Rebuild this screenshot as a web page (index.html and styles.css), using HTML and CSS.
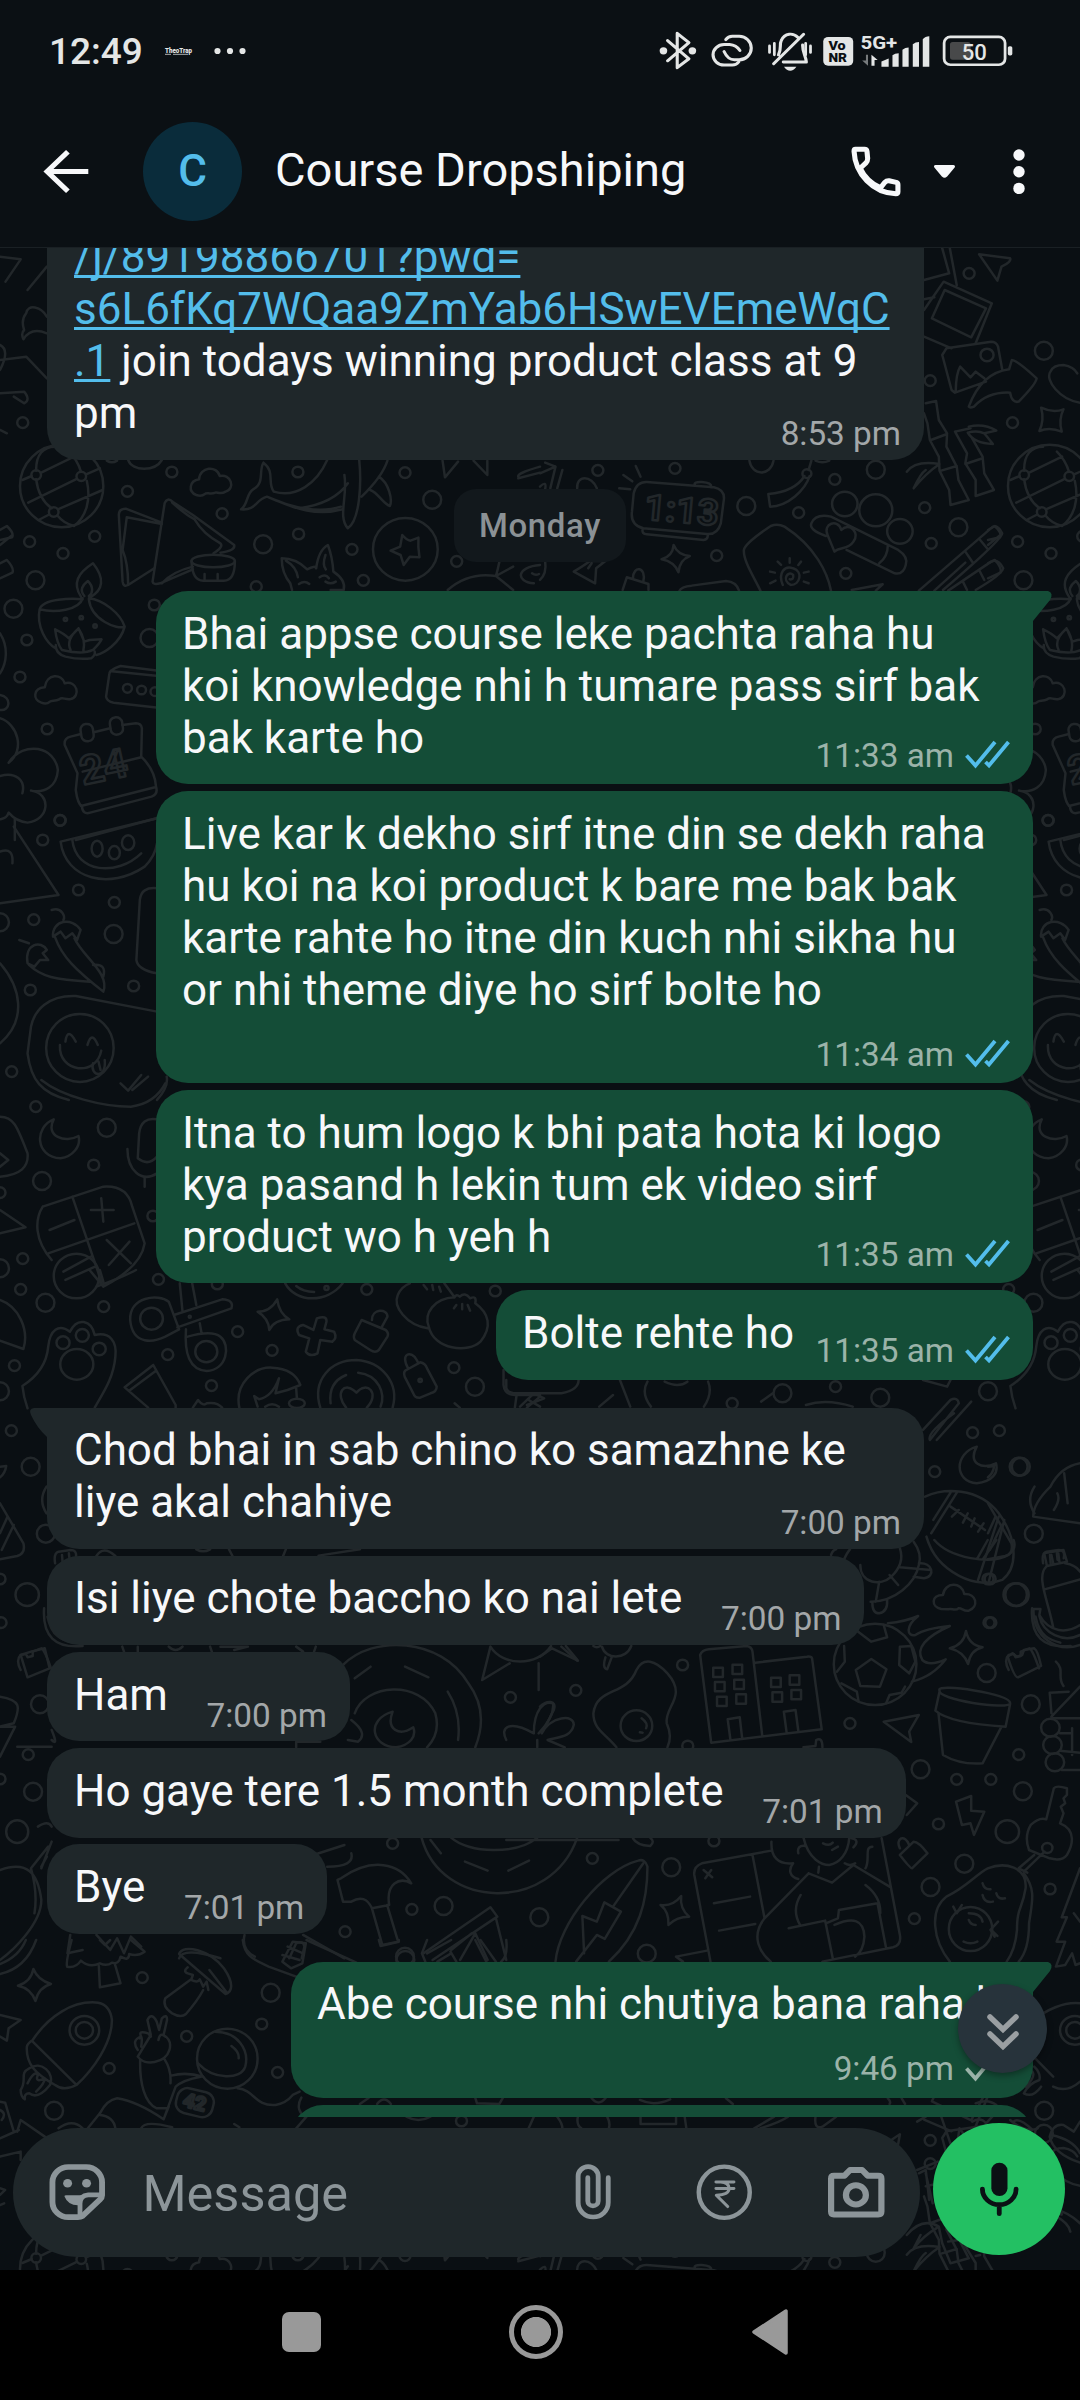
FILE: index.html
```html
<!DOCTYPE html>
<html lang="en">
<head>
<meta charset="utf-8">
<title>Course Dropshiping</title>
<link rel="stylesheet" href="styles.css">
</head>
<body>
<div class="screen">

<svg class="wallpaper" viewBox="0 0 1080 2270" width="1080" height="2270" aria-hidden="true">
  <defs>
  <g id="top">
    <g class="q" transform="translate(0 440) scale(.3444 .3333)">
      <ellipse cx="179" cy="138" rx="121" ry="124"/>
      <path d="M105 92C104 45 125 20 160 20M105 118C110 160 130 190 150 205M121 97L215 50M235 95Q225 60 200 35M65 120L92 108M82 188L220 118M250 103L290 85M168 208L298 150M140 225L112 240M252 122C265 180 250 230 215 258M168 228Q185 250 215 258"/>
      <circle cx="105" cy="105" r="14"/><circle cx="236" cy="109" r="14"/><circle cx="156" cy="216" r="14"/>
      <path d="M470 248L365 206Q345 206 345 225L356 425Q358 442 372 435L448 385M470 252L368 232L356 330Q372 370 372 432"/>
      <path d="M478 190Q486 170 502 186L560 225L680 315Q684 332 640 338M478 190L443 425Q445 436 465 430L560 388M500 188Q540 225 565 238Q590 282 640 310Q650 320 620 340M470 430Q500 395 560 380"/>
      <ellipse cx="619" cy="363" rx="63" ry="19"/><path d="M556 363Q558 422 590 422H650Q682 422 682 363M594 402V418M632 402V418"/>
      <path d="M570 165C545 155 550 122 578 118C580 80 630 75 638 108C670 100 685 145 655 155C640 165 630 155 625 158C610 165 600 155 595 162Q585 170 570 165Z"/>
      <path d="M372 60C385 95 450 95 470 60M310 62Q325 72 340 62"/>
      <path d="M765 68C800 95 775 130 795 155C860 175 920 130 950 60M765 68C750 90 770 130 735 148C715 160 720 195 700 208C745 212 740 180 775 170C830 190 900 235 995 208M780 172C850 205 930 220 990 200M1000 105C1010 170 980 230 1010 265C1045 240 1050 130 1043 60M1010 130Q970 190 870 205M1050 170Q1110 110 1125 62M1100 110C1130 130 1140 180 1132 198C1110 190 1100 160 1075 150"/>
      <path d="M1285 62L1292 112L1330 65M1375 62L1415 105V62M1505 110Q1500 100 1568 80M1505 115L1568 98"/>
      <circle cx="1177" cy="328" r="94"/>
      <path d="M1168 285Q1180 300 1192 302L1215 293Q1213 320 1218 352L1190 350L1172 375L1163 345L1134 332L1162 320Z"/>
      <path d="M848 450L843 430Q818 400 818 355Q860 355 892 388Q915 375 918 385Q925 330 952 315Q965 350 968 395Q1005 420 998 450H960M830 362Q860 380 865 412M945 345Q935 375 946 388M868 432Q885 420 898 432M928 412Q945 400 955 415M945 425Q960 435 975 425"/>
      <path d="M1300 450Q1360 395 1440 408M1440 408L1490 380M1450 365Q1445 390 1440 408L1490 450M1568 375C1500 380 1495 425 1550 430M1545 400Q1555 408 1565 402"/>
      <path d="M235 470C210 430 225 400 270 370C305 415 300 450 262 472M245 468C230 450 240 435 255 423C272 440 270 460 258 468M240 475C230 510 160 520 115 508C125 475 210 475 240 478M258 475C300 480 350 520 362 560C340 570 265 540 258 478M115 508C105 560 135 610 162 625M362 560C350 610 300 640 280 645M162 615Q160 640 190 650Q230 660 265 655Q278 645 275 635M160 568Q165 610 180 630Q240 645 270 630Q290 610 295 598L260 600L245 605L228 565L200 595Q185 580 160 568M228 565Q190 600 205 630M228 565Q250 600 242 632"/>
      <circle cx="190" cy="538" r="5"/><circle cx="236" cy="533" r="5"/><circle cx="276" cy="558" r="5"/>
      <path d="M460 692L350 678Q315 690 317 705L308 770Q310 785 330 788L460 803M325 694L460 708"/>
      <circle cx="370" cy="745" r="13"/><circle cx="411" cy="750" r="13"/><circle cx="450" cy="755" r="13"/>
      <path d="M120 788C95 780 95 745 130 742C135 700 180 700 188 730C225 720 235 770 205 777C190 780 180 770 172 778C160 785 150 780 145 785Q135 795 120 788Z"/>
      <path d="M0 300L35 292Q42 280 20 258L0 270M0 315L36 285M0 415L36 398Q42 385 20 360L0 370M0 580C25 620 20 670 0 700M0 765C35 770 30 815 0 810"/>
      <path d="M235 882L205 890Q185 895 188 915L225 1000L220 1050Q225 1090 238 1100Q240 1125 262 1118L440 1070Q460 1062 453 1040Q450 990 410 950L412 865Q410 850 395 850L355 855M272 877L320 865M240 995L410 952M235 1098L450 1042"/>
      <rect x="235" y="852" width="36" height="52" rx="17" transform="rotate(-8 252 878)"/><rect x="320" y="832" width="36" height="52" rx="17" transform="rotate(-8 338 858)"/>
      <text x="242" y="1035" font-size="120" transform="rotate(-12 242 1035)">24</text>
      <path d="M0 835C50 850 75 930 25 968C70 900 160 920 168 990C165 1040 130 1060 90 1052C150 1060 145 1140 80 1148C50 1145 35 1130 25 1118C20 1135 10 1135 0 1138M0 1008C45 995 75 1020 65 1060M43 1135V1200M220 1200L455 1135"/>
      <ellipse class="s" cx="499" cy="96"/><ellipse class="s" cx="370" cy="154"/><ellipse class="s" cx="645" cy="221"/><ellipse class="s" cx="865" cy="96"/><ellipse class="s" cx="1176" cy="98"/><ellipse class="s" cx="86" cy="305"/><ellipse class="s" cx="275" cy="289"/><ellipse class="s" cx="183" cy="340"/><ellipse class="s" cx="867" cy="282"/><ellipse class="s" cx="1022" cy="328"/><ellipse class="s" cx="1055" cy="421"/><ellipse class="s" cx="1326" cy="364"/><ellipse class="s" cx="744" cy="440"/><ellipse class="s" cx="448" cy="495"/><ellipse class="s" cx="78" cy="600"/><ellipse class="s" cx="58" cy="711"/><ellipse class="s" cx="137" cy="867"/><ellipse class="s" cx="175" cy="1141"/>
      <ellipse class="b" cx="1255" cy="179"/><ellipse class="b" cx="764" cy="313"/><ellipse class="b" cx="103" cy="421"/><ellipse class="b" cx="39" cy="506"/><ellipse class="b" cx="434" cy="594"/>
    </g>
    <g class="q" transform="translate(540 240) scale(.3444 .3333)">
      <path d="M230 745L262 748M242 705L268 724M278 678L292 710M15 668L45 680M0 700L45 680L30 745M65 690L50 745M0 740Q20 720 15 748M108 745C105 705 150 705 165 745"/>
      <path d="M310 726L505 742Q540 750 533 785L525 850Q515 885 485 882L300 865Q262 855 267 815L272 760Q280 725 310 726ZM450 735Q445 725 470 726Q500 728 497 742M298 868Q295 882 310 883L475 900Q488 898 487 885"/>
      <text x="300" y="838" font-size="108" transform="rotate(5 300 838)">1:13</text>
      <path d="M608 662C615 708 670 710 678 662M788 662L780 690M768 708Q740 755 663 762L668 800C720 800 770 750 783 708"/>
      <circle cx="775" cy="701" r="13"/><path d="M800 662Q820 672 840 662"/>
      <path d="M388 915Q400 945 435 948Q405 960 402 997Q390 965 353 958Q385 950 388 915Z"/>
      <path d="M98 995Q130 975 145 963H190L163 985L160 1030ZM140 985L150 970M0 1020Q20 1000 15 965M240 1050L252 1012L315 1032V1050M270 1015C270 975 310 980 300 1025M405 1052Q410 1040 440 1037L540 1023Q570 1025 578 1052"/>
      <path d="M640 1052C615 1000 590 960 592 930Q595 910 670 858Q690 850 710 860C800 920 835 1000 845 1052M640 1052"/>
      <path d="M705 1035C690 1000 710 975 735 985C765 995 755 1035 728 1035C700 1020 720 990 735 1005Q738 1020 725 1018M725 955V968M758 965L750 975M780 995L766 998M780 1030L766 1025M668 995L682 998M668 1030L684 1022M690 965L700 975"/>
      <circle cx="885" cy="792" r="37"/><circle cx="975" cy="811" r="48"/><circle cx="1045" cy="874" r="37"/>
      <path d="M830 888Q780 870 788 850Q800 820 845 830L1040 930Q1070 950 1062 975Q1055 1005 1030 1000L890 930M835 885C820 850 865 835 875 870C900 845 930 880 910 905C895 930 870 920 855 935ZM1010 915Q1010 950 985 970"/>
      <path d="M905 1050L995 1033L975 1052M1100 1052L1315 860Q1330 855 1342 880Q1340 900 1170 1050M1145 1052L1235 968M1235 935L1258 970M1278 900L1298 925M1185 1052L1310 965Q1330 955 1345 985Q1340 1005 1265 1050M1228 1025L1240 1050M1275 990L1290 1020"/>
      <path d="M1065 695Q1090 660 1160 672Q1120 700 1085 745Q1105 700 1120 690M1120 490L1150 483L1158 540L1182 580L1180 620L1210 680L1215 720L1245 780L1192 795L1188 750L1160 692L1158 650L1132 600L1125 550L1115 520M1135 600L1182 582M1165 692L1210 678M1205 575L1250 565M1205 575L1240 640L1235 670L1265 720V768L1318 750L1290 700L1285 650L1252 590M1235 672L1285 655M1245 560Q1290 550 1325 572L1290 580L1315 612Q1260 610 1242 578Q1270 570 1290 580"/>
      <path d="M1275 43L1365 55Q1370 65 1340 80L1328 122ZM1168 25L1188 100L1115 120M1190 25L1210 135M1115 210L1172 125L1312 190L1265 310M1175 150L1138 235L1252 292L1295 205ZM1115 178L1145 172M1115 290L1195 325"/>
      <path d="M1295 425L1205 458L1195 450L1168 345L1180 325L1310 305Q1325 305 1330 320L1342 388M1207 455Q1208 400 1220 380L1250 412L1265 395L1290 415M1245 500C1270 430 1310 395 1362 388L1370 360Q1385 360 1442 415Q1442 430 1390 485Q1370 490 1365 458Q1300 455 1260 500Q1248 505 1245 500Z"/><circle cx="1298" cy="345" r="19"/>
      <path d="M1455 503Q1490 520 1520 508Q1505 540 1515 575Q1480 560 1450 573Q1465 540 1455 503Z"/>
      <path d="M1568 488C1510 480 1465 420 1482 395Q1490 375 1520 375Q1550 380 1560 400"/>
      <ellipse class="s" cx="168" cy="691"/><ellipse class="s" cx="392" cy="685"/><ellipse class="s" cx="856" cy="718"/><ellipse class="s" cx="751" cy="818"/><ellipse class="s" cx="513" cy="947"/><ellipse class="s" cx="888" cy="1000"/><ellipse class="s" cx="1117" cy="803"/><ellipse class="s" cx="1136" cy="910"/><ellipse class="s" cx="1372" cy="548"/><ellipse class="s" cx="1133" cy="422"/><ellipse class="s" cx="1246" cy="100"/>
      <ellipse class="b" cx="599" cy="798"/><ellipse class="b" cx="975" cy="689"/><ellipse class="b" cx="1215" cy="862"/><ellipse class="b" cx="1463" cy="332"/>
    </g>
  </g>

  <g id="left">
    <g class="n" transform="translate(0 580) scale(.6888 .3333)">
      <path d="M88 785L228 715M88 785C95 900 160 930 210 860Q225 830 228 790M105 780C110 880 170 890 205 820M20 740L85 945L0 970M0 815Q20 800 18 850"/>
      <ellipse cx="141" cy="806" rx="8" ry="24"/><ellipse cx="166" cy="818" rx="8" ry="20"/><ellipse cx="186" cy="788" rx="9" ry="22"/>
      <path d="M75 990C90 980 95 1010 92 1020M77 1070C75 1020 105 1010 117 1050L112 1080L105 1060L95 1075L88 1055ZM80 1072C90 1130 110 1170 150 1235C160 1180 120 1130 108 1075M28 1080L42 1090M40 1150C35 1090 60 1080 68 1110L62 1120L70 1140L58 1140L50 1160ZM42 1155C60 1190 80 1200 130 1205M135 1155Q155 1150 150 1190M228 925Q205 920 203 960L198 1140Q200 1170 228 1180"/>
      <path d="M228 1295L110 1248C70 1245 50 1290 45 1340L40 1420C45 1500 60 1540 100 1560M228 1560Q245 1520 242 1490M0 1150C30 1220 40 1320 0 1390"/>
      <ellipse cx="116" cy="1404" rx="49" ry="102"/><path d="M95 1385Q98 1340 110 1385M127 1395Q133 1350 142 1395M87 1395C85 1480 140 1490 147 1412M135 1450C130 1490 155 1500 152 1440M143 1445L146 1470M175 1510L186 1532L205 1485M192 1530L215 1490"/>
      <ellipse class="s" cx="87" cy="721"/><ellipse class="s" cx="62" cy="780"/><ellipse class="s" cx="114" cy="930"/><ellipse class="s" cx="166" cy="967"/><ellipse class="s" cx="49" cy="1019"/><ellipse class="b" cx="165" cy="1062"/><ellipse class="s" cx="194" cy="1218"/><ellipse class="s" cx="44" cy="1230"/><ellipse class="s" cx="17" cy="1475"/><ellipse class="b" cx="0" cy="1027"/>
    </g>
    <g class="n" transform="translate(0 1080) scale(.6888 .3333)">
      <path d="M60 0C90 50 150 80 190 80Q225 70 240 10M0 110C20 110 25 140 40 220C42 260 30 285 0 290M0 220L12 240L0 260M78 118C50 140 50 230 88 235C105 230 118 200 114 168C95 190 65 170 78 118ZM228 118Q205 110 202 160L200 235Q215 260 228 230M185 207C185 270 205 310 228 280M210 290V320M0 390L37 442L0 460"/>
      <path d="M62 380L150 320Q185 315 192 380L210 490Q205 560 150 620L130 570M62 380C50 420 50 480 75 540M105 350L148 610M70 520L195 430M72 450L108 420M132 390L165 390M147 355L150 425M155 480L190 550M188 485L158 555M92 575L132 530M95 600L138 560"/>
      <ellipse cx="111" cy="588" rx="33" ry="67"/>
      <ellipse class="s" cx="52" cy="80"/><ellipse class="b" cx="155" cy="143"/><ellipse class="s" cx="136" cy="255"/><ellipse class="b" cx="61" cy="303"/><ellipse class="s" cx="0" cy="338"/><ellipse class="s" cx="33" cy="536"/><ellipse class="b" cx="0" cy="565"/><ellipse class="s" cx="222" cy="408"/>
    </g>
    <g class="q" transform="translate(0 1270) scale(.3444 .3333)">
      <path d="M65 348C100 325 135 290 140 230C145 180 170 160 203 185C225 140 265 150 275 195C320 185 340 215 335 260C330 320 305 360 275 413M65 348Q68 380 80 415"/>
      <circle cx="183" cy="218" r="19"/><circle cx="239" cy="196" r="19"/><circle cx="288" cy="237" r="19"/><ellipse cx="223" cy="283" rx="48" ry="46"/>
      <path d="M0 90C55 110 85 180 68 237L0 212M0 590L18 588Q15 610 0 622M0 700L68 820Q75 850 50 858L0 868M0 790L22 740M5 840L40 765M160 880Q155 850 170 845L205 840Q225 840 220 865M180 855L182 880M200 850L202 870M128 1015Q120 1140 240 1128M138 1040C150 1100 180 1110 210 1118M60 1200Q45 1170 60 1155L75 1152L80 1162L95 1158V1145L120 1135Q130 1140 148 1195M135 650Q110 690 135 730"/>
      <ellipse class="s" cx="60" cy="58"/><ellipse class="s" cx="301" cy="110"/><ellipse class="s" cx="42" cy="287"/><ellipse class="s" cx="33" cy="482"/><ellipse class="s" cx="0" cy="927"/><ellipse class="s" cx="3" cy="1058"/><ellipse class="b" cx="132" cy="98"/><ellipse class="b" cx="0" cy="364"/><ellipse class="b" cx="89" cy="590"/><ellipse class="b" cx="133" cy="791"/><ellipse cx="79" cy="974" rx="34" ry="34"/>
    </g>
  </g>
  </defs>

  <g class="lines">
    <use href="#top"/>
    <use href="#top" x="988"/>
    <use href="#top" y="1783"/>
    <use href="#left"/>
    <use href="#left" x="988"/>
    <g class="n" transform="translate(0 240) scale(.6888 .3333)">
      <path d="M0 50L30 58L8 125M68 230C60 200 40 190 38 220Q30 240 35 270Q30 280 34 298Q45 260 68 280M0 360L38 350L68 415M0 460L35 455Q45 480 35 490L20 470M0 570L10 580M40 150L68 80M0 315Q15 330 0 390"/>
      <ellipse class="s" cx="33" cy="548"/>
    </g>

    <g class="q" transform="translate(0 1270) scale(.3444 .3333)">
      <path d="M280 50Q360 20 395 0M290 0L300 35"/>
      <path d="M490 95C460 70 375 80 378 150C385 230 450 215 480 200L520 178ZM505 135L645 88Q680 90 672 115L515 172M522 40L530 125M558 40L570 105M540 178C535 250 550 300 600 303C660 300 670 225 640 200Q615 180 545 200M580 160L585 188"/>
      <circle cx="440" cy="146" r="33"/><circle cx="599" cy="245" r="32"/><circle cx="551" cy="140" r="3"/>
      <path d="M805 88Q810 130 840 148Q795 150 782 180Q780 145 748 125Q785 125 805 88ZM920 145Q950 135 948 155L942 178L970 185Q980 205 965 215L930 210L922 250Q900 262 888 245L898 205L868 195Q855 170 880 165L910 180Z"/>
      <path d="M1050 150L1120 180Q1130 190 1125 200L1100 240Q1090 250 1075 240L1030 210Q1025 200 1030 190ZM1080 150C1080 115 1125 115 1125 140L1108 172M1180 300L1220 277Q1235 280 1240 295L1268 350Q1268 365 1250 370L1220 383Q1205 385 1200 370L1175 320Q1170 305 1180 300ZM1185 295C1160 250 1195 240 1210 270L1215 280"/><circle cx="1220" cy="331" r="5"/>
      <path d="M1242 175C1180 165 1140 110 1155 75Q1165 50 1190 40M1320 82C1260 85 1230 130 1245 170C1260 240 1360 250 1395 215C1430 170 1420 130 1380 100Q1385 75 1365 85Q1350 65 1335 80Q1325 70 1320 82L1290 40M1325 105L1318 115M1342 102V118M1358 105L1365 122M1230 45L1240 58M1255 45L1258 60M1275 50L1280 65"/>
      <path d="M828 40C860 100 950 100 995 40M860 48Q880 65 912 66"/><circle cx="948" cy="54" r="6"/>
      <path d="M445 285L362 352L430 413M445 285L510 405V413M375 362L452 303M560 413L575 390Q590 410 600 400Q630 395 645 413M695 413C680 340 740 290 790 293C830 295 860 310 872 345L835 360L800 370L810 325Q790 380 752 388L738 378L748 410M770 410Q790 395 810 410M860 355L862 385"/>
      <ellipse cx="862" cy="400" rx="23" ry="14"/>
      <path d="M930 413C905 330 960 270 1035 270C1110 275 1160 340 1140 413M960 400C955 360 970 330 1005 315M1040 308C1100 315 1120 370 1105 410M1005 413C970 370 1000 330 1035 368C1065 330 1105 370 1065 413"/>
      <path d="M1462 300V345Q1465 375 1495 375H1568M1500 375L1495 413M1530 413L1568 380M1535 390L1568 410M1320 400L1335 413"/>
      <path d="M280 858Q300 825 335 858M570 838Q590 850 610 838M665 838L675 858M830 838L822 858M925 857L1045 838M355 1130L360 1145M400 1130V1145M490 1130Q510 1150 530 1130M610 1130L615 1145M640 1130L720 1130L680 1140M860 1130L880 1145M917 1130L912 1145"/>
      <ellipse class="s" cx="460" cy="28"/><ellipse class="s" cx="631" cy="42"/><ellipse class="s" cx="690" cy="185"/><ellipse class="s" cx="487" cy="254"/><ellipse class="s" cx="614" cy="347"/><ellipse class="s" cx="790" cy="241"/><ellipse class="s" cx="1065" cy="58"/><ellipse class="s" cx="1318" cy="293"/><ellipse class="s" cx="1438" cy="63"/><ellipse class="b" cx="1379" cy="350"/>
    </g>
    <g class="n" transform="translate(0 1080) scale(.6888 .3333)">
      <path d="M735 900V925Q738 940 750 940H815Q840 930 840 900M755 980L775 940L790 955L765 975M870 980L890 945M900 900L915 980M940 905Q930 940 945 980M1028 905Q1035 940 1022 980M965 905Q985 925 998 905M1340 900L1375 920L1380 900M1340 1050L1380 960Q1390 950 1392 970L1350 1080Q1345 1060 1385 1000M1360 1080L1410 965M1105 965L1122 940M1170 975Q1200 955 1238 980"/>
      <path d="M1418 1100C1385 1120 1385 1205 1418 1210C1440 1205 1450 1180 1446 1150C1425 1170 1405 1150 1418 1100ZM1343 1250C1370 1225 1420 1220 1450 1300C1475 1370 1480 1460 1455 1500C1420 1530 1360 1480 1345 1370M1380 1238L1355 1320M1390 1235L1352 1360M1450 1310L1420 1500M1458 1320L1435 1510M1380 1280L1430 1350M1382 1310L1392 1290M1398 1328L1405 1300M1410 1340L1415 1315M1420 1355L1428 1330"/>
      <ellipse class="b" cx="1136" cy="940"/><ellipse class="s" cx="1213" cy="920"/><ellipse class="b" cx="1278" cy="953"/><ellipse class="s" cx="1412" cy="1058"/><ellipse class="s" cx="1357" cy="1175"/><ellipse class="b" cx="1482" cy="1160"/><ellipse class="s" cx="1063" cy="970"/>
      <path d="M1568 1150Q1540 1160 1525 1220Q1500 1270 1500 1310L1568 1330M1545 1180L1550 1270M1535 1240Q1540 1260 1530 1290"/>
    </g>
    <g class="q" transform="translate(540 1540) scale(.3444 .3333)">
      <path d="M845 45Q850 30 860 28M880 65Q890 40 900 28M930 75C930 130 990 140 1020 110Q1060 70 1045 25M1085 5Q1110 40 1100 75C1090 130 1030 185 960 185M1045 82L1135 90M1100 70C1140 65 1150 110 1115 115L1085 110M1015 105L1040 135M985 125L975 185M965 188Q965 220 985 220Q1010 215 1008 180"/>
      <path d="M1145 0C1190 55 1310 75 1360 45Q1385 25 1375 0M1270 55L1300 0M1288 55L1325 0"/>
      <path d="M1165 207C1135 200 1135 165 1170 165C1175 125 1225 125 1232 162C1268 160 1275 200 1245 212C1230 215 1225 203 1215 205C1205 215 1195 203 1185 208Z"/>
      <ellipse cx="973" cy="373" rx="120" ry="122"/><path d="M962 357L1006 388L987 440L930 438L917 390ZM920 272L962 305L1008 292L998 255M1045 320L1078 318L1090 365L1072 400L1043 375ZM883 318L885 365L862 395M875 430L920 455L925 485M1060 440L1050 458L1015 465L1005 490M1010 250Q1060 245 1098 228C1060 260 1065 290 1090 285Q1120 265 1190 258C1120 290 1090 325 1110 360Q1130 380 1178 358Q1140 410 1080 425"/>
      <path d="M1237 273Q1245 315 1285 322Q1250 330 1243 372Q1230 335 1190 325Q1230 315 1237 273ZM1358 350L1372 340L1385 350L1400 345L1405 330L1435 325Q1445 330 1455 378L1388 412Q1378 415 1358 350ZM1498 365C1525 390 1500 410 1520 438"/>
      <path d="M1465 45Q1460 40 1470 38L1520 30L1530 65L1472 78ZM1485 45L1490 70M1505 40L1508 65M1470 80C1440 110 1475 180 1490 262M1525 70Q1555 75 1568 95M1465 148L1568 118M1433 207H1453L1450 225C1480 280 1530 280 1568 255M1433 207C1430 290 1500 340 1568 315M1450 228C1460 280 1520 310 1568 285"/>
      <path d="M465 345Q470 330 490 328L600 318Q615 320 617 335L645 585M465 345L497 608L818 568L790 355Q788 348 775 350L625 368M545 538L580 532L587 595M545 538L553 600M708 515L742 510L750 573M708 515L716 577"/>
      <rect x="503" y="383" width="28" height="28"/><rect x="559" y="374" width="28" height="28"/><rect x="508" y="426" width="28" height="28"/><rect x="564" y="419" width="28" height="28"/><rect x="514" y="470" width="28" height="28"/><rect x="570" y="463" width="28" height="28"/><rect x="671" y="413" width="28" height="28"/><rect x="725" y="406" width="28" height="28"/><rect x="675" y="457" width="28" height="28"/><rect x="730" y="450" width="28" height="28"/>
      <path d="M222 622C190 580 155 570 155 520C165 440 250 470 280 390C300 350 335 360 370 400C430 470 360 500 368 550Q385 590 370 622"/><circle cx="280" cy="557" r="46"/><path d="M295 535Q315 550 308 565M290 577L298 578"/>
      <path d="M0 350L35 325L110 362L75 318M180 320C190 360 250 360 265 318M208 352L195 388Q180 385 190 352M0 500C20 480 50 480 40 510L5 580C30 530 100 520 98 555C90 590 60 590 22 600L72 622M155 318Q165 325 175 318M765 622L800 618L802 600Q820 590 820 622"/>
      <path d="M998 545L1100 525L1072 575L1078 606ZM1160 450C1150 430 1370 460 1365 490C1360 510 1150 480 1160 450ZM1160 455L1148 512Q1190 550 1352 560L1365 492M1157 520L1170 645Q1220 675 1285 670L1340 560M1485 520L1480 458L1535 455M1485 530L1568 440M1485 535H1568M1510 580H1540M1510 632L1568 638M1515 690H1568M1545 565V645"/>
      <circle cx="1482" cy="563" r="27"/><circle cx="1488" cy="615" r="27"/><circle cx="1495" cy="667" r="27"/>
      <path d="M1208 785L1252 768V812L1290 815L1260 885L1250 850L1225 855ZM1062 765L1095 790L1065 825M1492 745Q1500 735 1530 745V765L1520 775L1525 790L1512 800L1520 820L1510 850C1560 870 1545 920 1530 945Q1515 965 1480 955L1420 930Q1405 890 1425 855Q1450 830 1470 838ZM1465 935L1405 995M1435 945L1390 985L1415 998"/><circle cx="1473" cy="924" r="15"/>
      <path d="M1045 945L1085 905Q1100 905 1125 940L1080 985Q1075 985 1045 945ZM1045 925C1030 895 1060 880 1072 915M1190 1265C1140 1200 1130 1110 1180 1070C1240 1040 1270 1000 1300 985C1350 965 1415 980 1410 1045C1400 1110 1385 1100 1385 1170Q1380 1230 1355 1265M1405 1000C1440 1050 1430 1080 1420 1150Q1420 1230 1390 1265M1285 1030Q1290 1050 1308 1048M1285 1065Q1290 1090 1315 1085M1325 1060Q1330 1080 1350 1075M1200 1100L1210 1120L1225 1095M1245 1120Q1280 1120 1285 1145M1245 1140Q1250 1155 1265 1155M1230 1205Q1250 1215 1270 1205M1330 1145L1308 1170L1320 1190M1310 1170L1328 1188"/><ellipse cx="1250" cy="1167" rx="63" ry="66"/>
      <path d="M45 1265C55 1150 180 990 285 962Q305 955 312 980C312 1080 290 1180 200 1265M300 970L212 1100M105 1265L165 1185L188 1197L235 1115L187 1087L165 1145L123 1128L128 1240M350 1095Q385 1100 410 1068Q405 1105 433 1130Q395 1130 373 1155Q375 1115 350 1095M270 895Q280 915 320 918Q335 905 320 893"/>
      <path d="M672 932L470 970Q445 980 448 1005L495 1265M617 945L652 1135M475 990L500 1012M497 990L480 1015M505 1090L610 1070M520 1172L625 1152M395 1250L485 1232M395 1250L415 1265M672 905C670 950 690 975 735 970C720 990 725 1010 750 1017M765 893C780 960 820 975 840 975C870 970 895 940 898 893M885 970Q900 980 915 970M965 920C940 920 960 960 945 985M992 895L1045 1185Q1050 1215 1025 1222L820 1265M750 940Q745 915 770 918M905 895Q930 900 910 922M822 910Q840 920 850 908M848 930L865 920M810 980L808 998M780 1000L848 1028L910 975L1015 1040M780 1000L652 1135C610 1190 640 1240 670 1265M757 1065Q730 1110 755 1155M722 1165L828 1142L850 1255M830 1150L865 1135L868 1110L980 1090L1005 1225M855 1155C910 1130 940 1140 942 1190C940 1220 930 1240 915 1250M945 1035Q990 1070 988 1120"/>
      <path d="M1568 985L1515 1132H1530L1500 1205L1525 1205L1498 1280L1525 1275L1545 1240L1555 1275L1568 1270M1550 1120L1568 1145"/>
      <ellipse class="s" cx="1307" cy="117"/><ellipse class="s" cx="1309" cy="248"/><ellipse class="s" cx="414" cy="375"/><ellipse class="s" cx="104" cy="451"/><ellipse class="s" cx="900" cy="550"/><ellipse class="s" cx="1390" cy="644"/><ellipse class="s" cx="1210" cy="718"/><ellipse class="s" cx="1309" cy="718"/><ellipse class="s" cx="1157" cy="852"/><ellipse class="s" cx="505" cy="903"/><ellipse class="s" cx="152" cy="955"/><ellipse class="s" cx="1087" cy="1136"/><ellipse class="s" cx="1481" cy="1047"/><ellipse class="s" cx="429" cy="618"/>
      <ellipse class="b" cx="1297" cy="399"/><ellipse class="b" cx="1425" cy="493"/><ellipse class="b" cx="1105" cy="688"/><ellipse class="b" cx="1402" cy="754"/><ellipse class="b" cx="1232" cy="971"/><ellipse class="b" cx="1134" cy="1041"/><ellipse class="b" cx="381" cy="982"/><ellipse class="b" cx="310" cy="1241"/><circle cx="1385" cy="164" r="34"/><circle cx="1357" cy="875" r="34"/>
    </g>
    <g class="n" transform="translate(0 1540) scale(.6888 .3333)">
      <path d="M498 375C540 285 640 290 680 430C705 500 700 570 690 622M515 415L538 380M588 380L622 412M650 455Q670 520 665 600M515 520C530 430 610 420 632 520Q640 580 620 622M570 515C530 540 540 620 575 622C595 615 605 590 600 562C580 590 560 570 570 515ZM510 540Q535 580 520 605L505 600M430 622V605H465M700 420L712 320M700 420L740 370M782 450V370M838 362L815 320M712 320C730 380 780 380 800 318M735 600C725 560 740 540 775 580C775 510 790 480 803 490Q805 530 782 580M780 600V622M0 470C30 480 30 500 20 550L0 560M0 560H22L0 650M75 570Q85 620 75 600M25 620L75 620"/>
      <path d="M612 893C640 1110 800 1120 838 893M655 893C680 940 750 945 780 893M675 965L708 992M738 992L768 962M625 900L640 940M735 900H898M495 1015C540 950 580 970 597 1030C580 1010 560 1030 565 1095L540 1105Q530 1060 510 1085L498 1085L490 1020ZM540 1105L555 1215L578 1205L562 1095M615 1240L712 1102L722 1130L628 1260M690 1180L668 1260M690 1180L708 1260M720 1135L735 1260M655 1230L685 1180M455 945L500 915M475 980Q515 980 510 940"/>
      <path d="M0 990C40 960 55 1000 60 1080C60 1150 20 1230 0 1260M60 985L75 905M45 985Q55 1060 50 1120M45 985L70 920M60 980L68 950M55 860Q70 840 75 860M102 1185L98 1240L120 1230M355 1185Q350 1230 370 1250M440 1185L500 1255M420 1255L430 1210Q440 1200 442 1220L438 1255M260 1255Q265 1220 320 1255M140 1185L160 1230L170 1195L180 1240L190 1190L205 1220M30 345L45 335M30 345L40 412L72 385L65 325L45 335"/>
      <ellipse class="b" cx="58" cy="493"/><ellipse class="s" cx="41" cy="644"/><ellipse class="b" cx="48" cy="755"/><ellipse class="s" cx="0" cy="717"/><ellipse cx="25" cy="875" rx="16" ry="34"/><ellipse class="s" cx="741" cy="472"/><ellipse class="s" cx="598" cy="1108"/><ellipse class="b" cx="644" cy="1098"/><ellipse class="s" cx="501" cy="1175"/><ellipse class="s" cx="570" cy="910"/><ellipse class="b" cx="783" cy="1132"/><ellipse class="b" cx="588" cy="1250"/>
    </g>
    <g class="q" transform="translate(0 1940) scale(.3444 .3333)">
      <path d="M97 87Q110 120 148 132Q112 142 103 183Q90 145 52 137Q90 125 97 87ZM0 225L60 240L25 265L20 302L0 290M105 0Q75 85 0 102M75 0Q55 50 0 72"/>
      <path d="M208 0Q190 70 195 80Q220 85 235 62Q260 85 290 70Q310 80 325 68Q345 75 350 50Q375 65 375 42Q400 50 420 35L380 0M290 0L305 15L320 0M287 78L290 142L350 130L333 70"/>
      <path d="M95 300C140 230 210 180 285 188Q320 195 325 240C325 310 270 390 222 435Q185 455 160 435C100 400 75 370 78 320Q80 310 95 300ZM95 305L222 435M145 435C160 400 120 360 85 385C55 400 80 420 60 450Q60 470 72 478Q70 460 85 460Q110 480 145 435M80 430Q100 390 110 405Q100 430 130 415Q130 430 105 455"/><circle cx="245" cy="271" r="43"/><circle cx="245" cy="271" r="25"/>
      <path d="M520 42C530 10 610 30 650 85C680 130 675 155 655 162ZM545 82Q530 95 545 100L560 105L555 120Q575 130 580 118L590 140L600 125L605 150M608 90L660 160M555 118L480 175Q470 200 500 220Q525 235 540 222Q575 180 590 150"/>
      <path d="M705 0C710 50 740 60 780 80L860 110M890 0L1035 68M850 5L820 65L845 85L878 70L888 10ZM820 45L870 60M835 20L880 40M1100 0L1105 18L1158 5V0M1240 0L1225 40L1235 65M1240 40L1310 0M1310 40L1270 65M1308 35L1325 65M1380 0L1412 65M1395 0L1440 65M1470 0Q1475 50 1455 65"/>
      <path d="M400 330Q380 300 410 290Q400 270 430 280L438 290M438 285L428 240Q440 215 455 245L462 270L470 235Q485 220 485 240L475 285Q500 300 492 330C480 370 420 380 400 350ZM405 295Q415 280 410 320M460 300Q465 275 480 290M407 358C405 430 420 490 455 505L483 505M478 358Q498 390 495 430M497 407Q540 395 590 410M583 410Q530 420 510 440L475 538Q400 485 340 475Q310 480 290 520L255 565M290 525Q330 530 335 565M475 538L490 500M690 445C740 450 740 500 800 495Q830 490 850 465L870 455M410 565Q420 540 500 562M170 565Q210 535 240 565M0 485L15 488L40 575M0 510Q20 520 5 540M50 575L60 540L130 590M0 595L55 570M680 552L695 562M0 650L60 635V660M0 745L15 750L0 765M0 795L12 790"/>
      <ellipse cx="660" cy="356" rx="88" ry="90"/><path d="M575 370C620 420 700 420 712 380C725 330 690 275 625 275M672 318Q695 335 693 355"/>
      <rect x="512" y="450" width="108" height="76" rx="30" transform="rotate(14 566 487)"/><text x="532" y="507" font-size="58" transform="rotate(14 566 487)">42</text>
      <path d="M875 473C860 500 870 520 885 530M1045 492L1070 474M1180 530Q1215 550 1250 530M1095 492Q1115 465 1135 492M1380 474L1385 490L1450 492L1460 474M890 530L860 565M1535 565L1550 530"/>
      <ellipse class="s" cx="413" cy="113"/><ellipse class="s" cx="542" cy="289"/><ellipse class="s" cx="317" cy="385"/><ellipse class="s" cx="760" cy="252"/><ellipse class="s" cx="806" cy="397"/><ellipse class="s" cx="1340" cy="543"/><ellipse class="b" cx="786" cy="158"/><ellipse class="b" cx="157" cy="512"/><ellipse class="b" cx="1177" cy="60"/>
    </g>
    <g class="q" transform="translate(540 1940) scale(.3444 .3333)">
      <path d="M1435 240C1470 210 1520 185 1568 190M1433 350L1490 410M1435 380Q1455 400 1450 420Q1420 430 1405 460Q1430 475 1455 440M1430 395Q1440 410 1410 440M1490 440Q1530 460 1568 425"/><circle cx="1553" cy="271" r="43"/><circle cx="1553" cy="271" r="25"/>
      <path d="M1265 490Q1300 475 1325 495M1255 545Q1280 530 1295 550L1340 500M1375 545Q1390 530 1430 570M1365 540Q1410 580 1445 565M1480 590Q1490 550 1520 555L1550 575L1568 545M1480 590Q1490 640 1568 668M1485 585Q1550 600 1568 640M1020 600L1045 583L1040 612M1120 530L1095 545M1165 530L1195 620M1210 620L1218 565L1232 585M1095 690L1155 665M1100 700L1120 690L1130 780M1120 700L1140 790"/>
      <path d="M1065 885Q1110 830 1158 860Q1110 890 1085 925L1105 885M1158 860L1168 910L1192 970L1245 955L1220 905M1185 905L1215 900M1265 948L1278 945M1480 800Q1540 820 1568 850M1500 830Q1535 850 1540 875"/>
      <path d="M292 530V552H395V530M290 480Q330 500 378 478M110 530Q105 555 120 565M195 530Q205 550 200 565M420 530L425 565M50 530Q65 550 65 565M622 565L680 530M640 565Q700 545 720 530M800 530Q795 570 820 560L860 530M150 475Q170 500 190 475M540 475L560 492M1010 475Q1020 485 1015 492M1050 475L1060 492"/>
      <ellipse class="s" cx="1133" cy="601"/><ellipse class="b" cx="1464" cy="512"/>
    </g>
  </g>
</svg>

<div class="status-bar">
  <span class="clock">12:49</span>
  <svg class="notif" viewBox="0 0 28 8" width="28" height="8"><text x="0" y="6.2" textLength="27" lengthAdjust="spacingAndGlyphs">TheoTrap</text><path d="M0 7.3H6M8 7.3H23"/></svg>
  <svg class="dots3" viewBox="0 0 32 8" width="32" height="8"><circle cx="3.5" cy="4" r="3.1"/><circle cx="16" cy="4" r="3.1"/><circle cx="28.500" cy="4" r="3.1"/></svg>
  <svg class="tray" viewBox="348 90 1025 130" width="353" height="43" preserveAspectRatio="none">
    <g class="st" stroke-width="9">
      <path d="M370 122L432 177L398 204V100L432 128L370 183"/>
      <path d="M539 119Q546 109 558 109H578A35 35.500 0 0 1 578 180H564Q545 180 534 155"/><path d="M577 186Q570 196 558 196H534A32 31 0 0 1 534 134H550Q570 136 580 152"/>
      <path d="M692 165C702 145 694 135 700 122C710 98 735 98 748 112M762 135C762 160 772 170 773 187H706M765 103L678 192"/>
      <path d="M666 138V158M680 130V165M771 130V165M785 138V158" stroke-width="8"/>
    </g>
    <g class="fl">
      <circle cx="358" cy="153" r="11"/><circle cx="442" cy="153" r="11"/>
      <path d="M708 201H744Q736 213 726 213T708 201Z"/>
      <rect x="822" y="111" width="87" height="87" rx="14"/>
      <path d="M962 165L980 181H971V198H962Z"/><path d="M991 185L1012 176V201H991Z"/><path d="M1023 166Q1030 160 1041 160V201H1023Z"/><path d="M1052 150Q1060 143 1070 143V201H1052Z"/><path d="M1082 133Q1090 126 1100 126V201H1082Z"/><path d="M1111 118Q1118 109 1130 109V201H1111Z"/>
      <rect x="1358" y="139" width="13" height="28" rx="5"/>
    </g>
    <path d="M952 198L935 182H946V165H952Z" fill="#777b7d"/>
    <rect x="1190" y="126" width="60" height="54" rx="8" fill="#48494a"/>
    <rect x="1173" y="111" width="177" height="84" rx="18" class="st" stroke-width="8"/>
    <g class="traytext">
      <text x="837" y="150" font-size="38" textLength="50" lengthAdjust="spacingAndGlyphs" fill="#0b1014" font-weight="900">Vo</text>
      <text x="837" y="188" font-size="39" textLength="54" lengthAdjust="spacingAndGlyphs" fill="#0b1014" font-weight="900">NR</text>
      <text x="930" y="146" font-size="56" textLength="107" lengthAdjust="spacingAndGlyphs" fill="#e4e6e6" font-weight="700">5G+</text>
      <text x="1224" y="181" font-size="68" textLength="73" lengthAdjust="spacingAndGlyphs" fill="#e4e6e6" font-weight="500">50</text>
    </g>
  </svg>
</div>

<header class="chat-header">
  <svg class="back" viewBox="128 445 130 136" width="45" height="45" preserveAspectRatio="none"><path d="M256 513H140M197 453L137 513L197 573"/></svg>
  <div class="avatar">C</div>
  <h1>Course Dropshiping</h1>
  <svg class="phone" viewBox="900 436 150 154" width="51" height="51" preserveAspectRatio="none"><path d="M913 446H940Q946 446 947 452L949 474Q949 482 944 487L927 503Q946 544 987 562L999 546Q1005 540 1012 541L1033 546Q1038 548 1038 553V574Q1038 580 1032 580C965 578 912 520 909 452Q909 446 913 446Z"/></svg>
  <svg class="caret" viewBox="0 0 23 15" width="23" height="15"><path d="M2.500 2.500H20.500L13 11.500Q11.500 13 10 11.500Z"/></svg>
  <svg class="kebab" viewBox="0 0 12 46" width="12" height="46"><circle cx="6" cy="6" r="5.7"/><circle cx="6" cy="22.700" r="5.7"/><circle cx="6" cy="39.400" r="5.7"/></svg>
</header>

<main class="chat">
  <div class="bubble in cut wide">
    <p class="text"><a>/j/89198866701?pwd=</a><br><a>s6L6fKq7WQaa9ZmYab6HSwEVEmeWqC</a><br><a>.1</a> join todays winning product class at 9<br>pm</p>
    <span class="meta">8:53 pm</span>
  </div>
  <div class="day">Monday</div>

  <div class="bubble out wide">
    <svg class="tail" viewBox="0 0 24 34" width="24" height="34"><path d="M0 0H20Q26 2 22 9L5 30V34H0Z"/></svg>
    <p class="text">Bhai appse course leke pachta raha hu<br>koi knowledge nhi h tumare pass sirf bak<br>bak karte ho</p>
    <span class="meta">11:33 am <svg class="ticks" viewBox="0 0 45 28" width="45" height="28"><path d="M1.500 15.500L10.500 25.500L30 2M20.500 22L24 25.500L43.500 2"/></svg></span>
  </div>
  <div class="bubble out wide tall">
    <p class="text">Live kar k dekho sirf itne din se dekh raha<br>hu koi na koi product k bare me bak bak<br>karte rahte ho itne din kuch nhi sikha hu<br>or nhi theme diye ho sirf bolte ho</p>
    <span class="meta">11:34 am <svg class="ticks" viewBox="0 0 45 28" width="45" height="28"><path d="M1.500 15.500L10.500 25.500L30 2M20.500 22L24 25.500L43.500 2"/></svg></span>
  </div>
  <div class="bubble out wide">
    <p class="text">Itna to hum logo k bhi pata hota ki logo<br>kya pasand h lekin tum ek video sirf<br>product wo h yeh h</p>
    <span class="meta">11:35 am <svg class="ticks" viewBox="0 0 45 28" width="45" height="28"><path d="M1.500 15.500L10.500 25.500L30 2M20.500 22L24 25.500L43.500 2"/></svg></span>
  </div>
  <div class="bubble out inline">
    <p class="text">Bolte rehte ho</p>
    <span class="meta">11:35 am <svg class="ticks" viewBox="0 0 45 28" width="45" height="28"><path d="M1.500 15.500L10.500 25.500L30 2M20.500 22L24 25.500L43.500 2"/></svg></span>
  </div>

  <div class="bubble in wide turn">
    <svg class="tail" viewBox="0 0 24 34" width="24" height="34"><path d="M24 0H7Q1 1 4 7Q10 20 20 29V34H24Z"/></svg>
    <p class="text">Chod bhai in sab chino ko samazhne ke<br>liye akal chahiye</p>
    <span class="meta">7:00 pm</span>
  </div>
  <div class="bubble in inline"><p class="text">Isi liye chote baccho ko nai lete</p><span class="meta">7:00 pm</span></div>
  <div class="bubble in inline"><p class="text">Ham</p><span class="meta">7:00 pm</span></div>
  <div class="bubble in inline"><p class="text">Ho gaye tere 1.5 month complete</p><span class="meta">7:01 pm</span></div>
  <div class="bubble in inline"><p class="text">Bye</p><span class="meta">7:01 pm</span></div>

  <div class="bubble out tall turn medium">
    <svg class="tail" viewBox="0 0 24 34" width="24" height="34"><path d="M0 0H20Q26 2 22 9L5 30V34H0Z"/></svg>
    <p class="text">Abe course nhi chutiya bana raha h</p>
    <span class="meta">9:46 pm <svg class="ticks" viewBox="0 0 45 28" width="45" height="28"><path d="M1.500 15.500L10.500 25.500L30 2"/></svg></span>
  </div>
  <div class="bubble out medium"></div>
</main>

<div class="scroll-down">
  <svg viewBox="0 0 32 36" width="32" height="36"><path d="M3 3L16 15.500L29 3M3 20L16 32.500L29 20"/></svg>
</div>

<footer class="composer">
  <div class="field">
    <svg class="ic sticker" viewBox="142 671 164 170" width="56.500" height="56.500" preserveAspectRatio="none"><path d="M198 680H250A46 46 0 0 1 296 726V765Q296 772 290 778L240 827Q234 831 226 831H198A46 46 0 0 1 152 785V726A46 46 0 0 1 198 680Z"/><path stroke-width="14" d="M232 829V790Q232 766 256 764H296"/><path class="f" d="M187 769Q186 765 192 765H252Q232 774 232 795Q198 798 187 769Z"/><circle class="f" cx="196" cy="729" r="13"/><circle class="f" cx="251" cy="729" r="13"/></svg>
    <span class="placeholder">Message</span>
    <svg class="ic clip" viewBox="97 671 104 170" width="36" height="56.500" preserveAspectRatio="none"><path stroke-width="14" d="M193 712V787A43 43 0 0 1 106 787V708A29 29 0 0 1 164 708V782A15 15 0 0 1 134 782V712"/></svg>
    <svg class="ic rupee" viewBox="453 671 164 170" width="56.500" height="56.500" preserveAspectRatio="none"><ellipse cx="535" cy="756" rx="74" ry="77" stroke-width="13"/><path stroke-width="9" d="M511 725H563M511 745H563M525 725Q549 727 549 744Q549 764 512 765L545 799"/></svg>
    <svg class="ic camera" viewBox="836 680 164 152" width="56.500" height="50.500" preserveAspectRatio="none"><path d="M853 706H884L900 689H935L951 706H982Q991 706 991 715V814Q991 823 982 823H853Q845 823 845 814V715Q845 706 853 706Z"/><circle cx="917" cy="764" r="29"/></svg>
  </div>
  <div class="mic">
    <svg viewBox="1277 662 112 162" width="38.500" height="54" preserveAspectRatio="none"><rect x="1310" y="664" width="47" height="100" rx="23.500"/><path d="M1284 743A49 47 0 0 0 1382 743M1333 790V817"/></svg>
  </div>
</footer>

<nav class="navbar">
  <span class="nav-recent"></span>
  <span class="nav-home"></span>
  <svg class="nav-back" viewBox="0 0 36 46" width="36" height="46"><path d="M34 2V44L2 23Z"/></svg>
</nav>
</div>
</body>
</html>
```
FILE: styles.css
```css
* { box-sizing: border-box; }
body {
  margin: 0;
  background: #0b1014;
  font-family: Roboto, "Noto Sans", sans-serif;
}
.screen {
  position: relative;
  width: 1080px;
  height: 2400px;
  overflow: hidden;
  display: flex;
  flex-direction: column;
  background: #0a0f13;
}
svg { display: block; flex: none; overflow: visible; }

/* Doodle wallpaper */
.wallpaper { position: absolute; left: 0; top: 0; overflow: hidden; }
.wallpaper g, .wallpaper use { fill: none; stroke: #22272a; stroke-linecap: round; stroke-linejoin: round; }
.wallpaper path, .wallpaper ellipse, .wallpaper circle, .wallpaper rect, .wallpaper text {
  vector-effect: non-scaling-stroke;
  stroke-width: 2.5px;
}
.wallpaper text { font-family: Roboto, sans-serif; font-weight: 700; }
.q .s { rx: 16px; ry: 16px; }
.q .b { rx: 26px; ry: 27px; }
.n .s { rx: 8px; ry: 16px; }
.n .b { rx: 13px; ry: 27px; }

/* Status bar */
.status-bar {
  position: relative;
  flex: none;
  height: 102px;
  padding: 0 67px 0 49px;
  display: flex;
  align-items: center;
  background: #0b1014;
}
.clock { width: 116px; padding-top: 2px; font-size: 37px; line-height: 44px; font-weight: 500; color: #e4e6e6; }
.notif text { font-size: 7px; font-weight: 900; fill: #e4e6e6; }
.notif path { stroke: #b0b3b4; stroke-width: 1; }
.dots3 { margin-left: 21px; fill: #e4e6e6; }
.tray { margin-left: auto; }
.tray .st { fill: none; stroke: #e4e6e6; stroke-linecap: round; stroke-linejoin: round; }
.tray .fl { fill: #e4e6e6; }

/* Chat header */
.chat-header {
  position: relative;
  flex: none;
  height: 146px;
  padding: 0 55px 6px 44px;
  display: flex;
  align-items: center;
  background: #0b1014;
  border-bottom: 1px solid #1a2024;
}
.back path { fill: none; stroke: #f7f8fa; stroke-width: 15; }
.avatar {
  margin-left: 54px;
  width: 99px;
  height: 99px;
  border-radius: 50%;
  background: #0a2c3b;
  color: #53bdeb;
  font-size: 44px;
  font-weight: 500;
  line-height: 99px;
  text-align: center;
}
.chat-header h1 { margin: 0 auto 0 33px; padding-bottom: 3px; color: #f7f8fa; font-size: 47px; font-weight: 400; line-height: 60px; white-space: nowrap; }
.phone path { fill: none; stroke: #f7f8fa; stroke-width: 15; stroke-linejoin: round; }
.caret { margin-left: 31px; fill: #f7f8fa; stroke: #f7f8fa; stroke-width: 3; stroke-linejoin: round; }
.kebab { margin-left: 57px; fill: #f7f8fa; }

/* Messages */
.chat {
  position: relative;
  flex: none;
  height: 1869px;
  overflow: hidden;
  display: flex;
  flex-direction: column;
  align-items: flex-start;
  gap: 6.7px;
  padding: 0 47px;
}
.bubble {
  position: relative;
  flex: none;
  display: grid;
  border-radius: 32px;
  padding: 16.6px 23px 20.9px 27px;
}
.in { background: #1f272a; }
.out { background: #144d37; align-self: flex-end; padding-left: 26px; }
.wide { width: 877px; }
.medium { width: 742px; min-height: 80px; }
.tall { padding-bottom: 67.5px; }
.cut {
  height: 212px;
  padding-top: 0;
  align-content: end;
  border-radius: 0 0 32px 32px;
}
.turn { margin-top: 21.4px; }
.text { grid-area: 1 / 1; margin: 0; color: #f7f8fa; font-size: 44px; line-height: 52px; white-space: nowrap; }
.text a { color: #53bdeb; text-decoration: underline; text-decoration-thickness: 2.5px; text-underline-offset: 3px; text-decoration-skip-ink: none; }
.meta {
  grid-area: 1 / 1;
  justify-self: end;
  align-self: end;
  display: flex;
  align-items: center;
  gap: 11px;
  margin-bottom: -12px;
  color: #a3a7a9;
  font-size: 33.3px;
  line-height: 40px;
  white-space: nowrap;
}
.in .meta { margin-bottom: -15px; }
.out .meta { color: #9bb3a9; }
.tall .meta { margin-bottom: -59px; }
.inline.in .text { padding-right: 159px; }
.inline.out .text { padding-right: 216px; }
.ticks { margin-top: -4px; }
.ticks path { fill: none; stroke: #53bdeb; stroke-width: 3.8; }
.medium .ticks path { stroke: #9bb3a9; }
.tail { position: absolute; top: 0; }
.out .tail { right: -19px; fill: #144d37; }
.in .tail { left: -20px; fill: #1f272a; }
.out:has(.tail) { border-top-right-radius: 0; }
.in:has(.tail) { border-top-left-radius: 0; }
.day {
  align-self: center;
  width: 172px;
  height: 73px;
  margin: 22.400px 0 22.200px;
  border-radius: 22px;
  background: #12181c;
  color: #8b9195;
  font-size: 33px;
  font-weight: 500;
  letter-spacing: .6px;
  line-height: 74px;
  text-align: center;
}

.scroll-down {
  position: absolute;
  left: 958px;
  top: 1984px;
  width: 89px;
  height: 89px;
  border-radius: 50%;
  background: #27333b;
  box-shadow: 0 3px 6px rgba(0, 0, 0, .35);
  display: grid;
  place-items: center;
  padding-top: 6px;
}
.scroll-down path { fill: none; stroke: #9a9fa2; stroke-width: 5.500; stroke-linecap: round; }

/* Composer */
.composer {
  position: relative;
  flex: none;
  height: 153px;
  padding: 6px 15px 0 13px;
  display: flex;
  align-items: flex-start;
  justify-content: space-between;
}
.field {
  width: 907px;
  height: 129px;
  margin-top: 5px;
  padding: 0 36px 0 36px;
  border-radius: 65px;
  background: #1f272a;
  display: flex;
  align-items: center;
}
.ic { fill: none; stroke: #8c9599; stroke-width: 18; stroke-linejoin: round; stroke-linecap: round; }
.sticker { stroke-width: 17; }
.ic .f { fill: #8c9599; stroke: none; }
.placeholder { margin: 0 auto 0 37px; padding-top: 3px; color: #8c9599; font-size: 50.5px; line-height: 60px; }
.rupee { margin-left: 85px; }
.camera { margin-left: 75px; }
.mic {
  width: 132px;
  height: 132px;
  border-radius: 50%;
  background: #23c063;
  display: grid;
  place-items: center;
}
.mic rect { fill: #0b1014; }
.mic path { fill: none; stroke: #0b1014; stroke-width: 14; stroke-linecap: round; }

/* System navigation */
.navbar {
  position: relative;
  flex: none;
  height: 130px;
  padding: 0 292px 6px 282px;
  display: flex;
  align-items: center;
  justify-content: space-between;
  background: #000;
}
.nav-recent { width: 39px; height: 40px; border-radius: 7px; background: #999; }
.nav-home {
  width: 54px;
  height: 54px;
  margin-right: 2px;
  border: 5px solid #999;
  border-radius: 50%;
  background: radial-gradient(circle, #999 14.700px, transparent 15.400px);
}
.nav-back { fill: #999; stroke: #999; stroke-width: 3.500; stroke-linejoin: round; }
```
